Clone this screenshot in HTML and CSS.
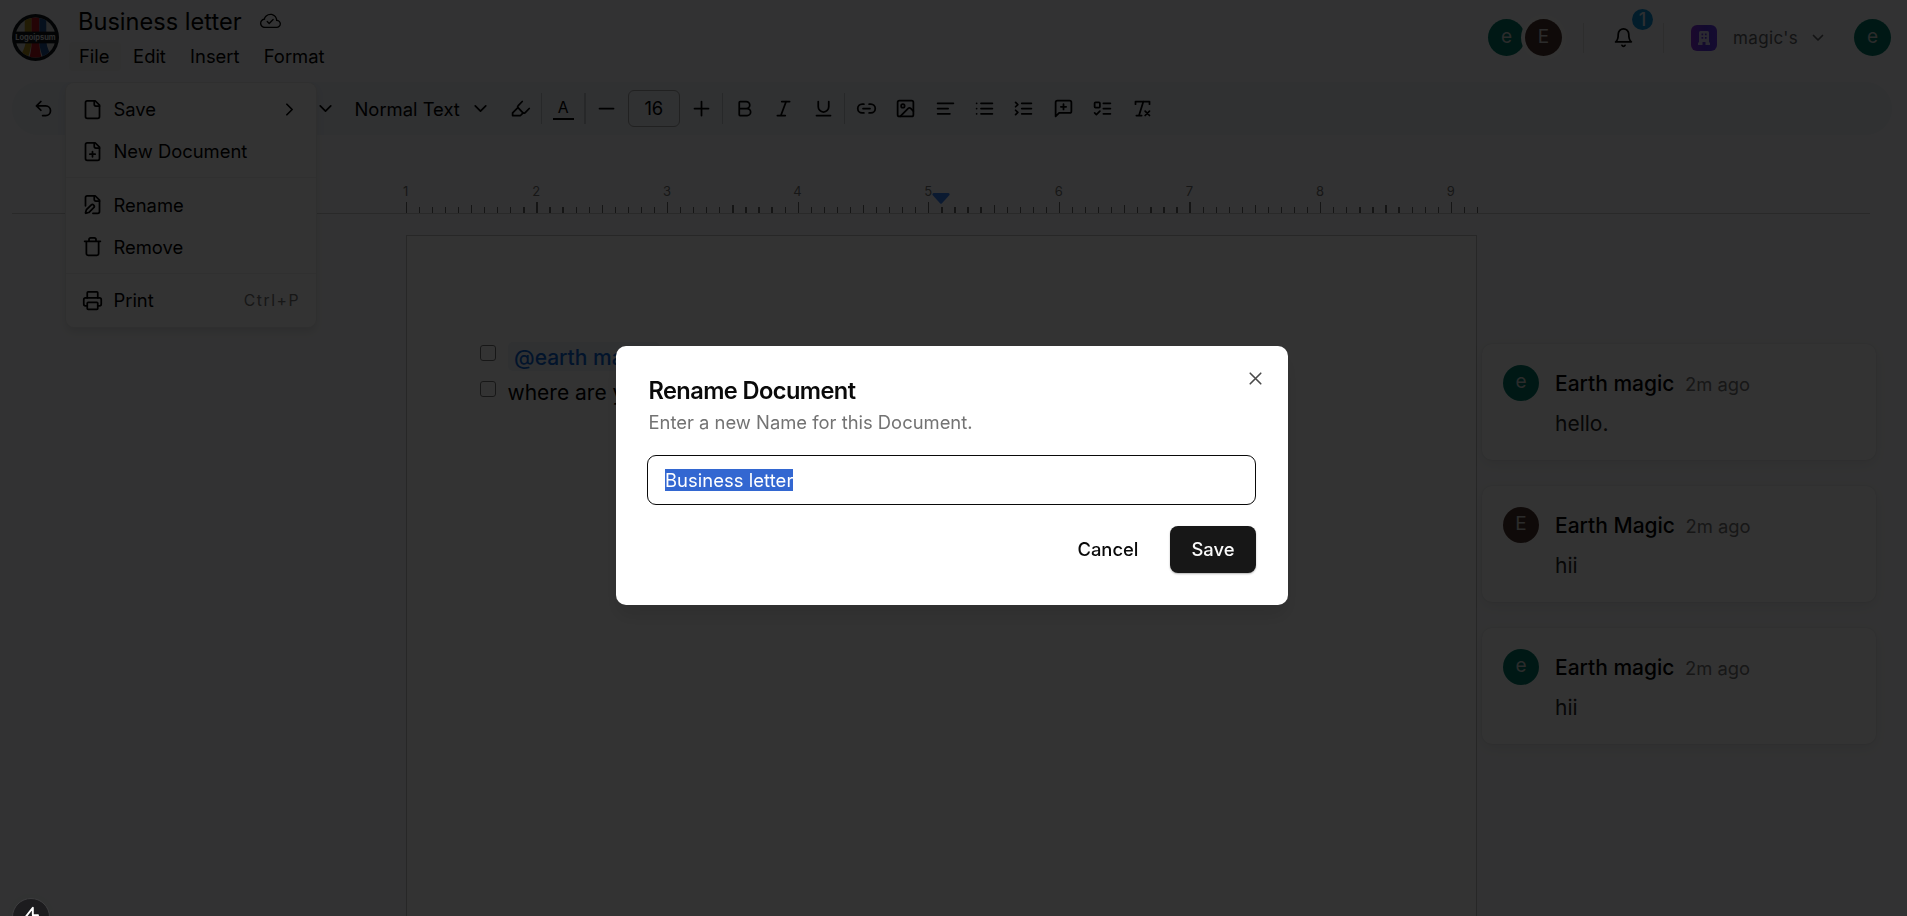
FILE: index.html
```html
<!DOCTYPE html>
<html lang="en">
<head>
<meta charset="utf-8">
<title>Business letter</title>
<link rel="stylesheet" href="styles.css">
</head>
<body>
<div class="app">
  <header class="header">
    <svg class="logo" viewBox="0 0 48 48">
      <defs><clipPath id="disc"><circle cx="24" cy="24" r="20.5"/></clipPath></defs>
      <circle cx="24" cy="24" r="24" fill="#10161d"/>
      <g clip-path="url(#disc)">
        <rect width="48" height="48" fill="#cfd0cf"/>
        <path d="M13 0h7v19h-7zM14 28h6c-.5 7-2 12-5 20H4c6-7 9-12 10-20z" fill="#a98a1c"/>
        <path d="M20 0h8v19h-8zM20 28h8c0 7 1 12 3 20H17c2-8 3-13 3-20z" fill="#b3161f"/>
        <path d="M28 0h7v19h-7zM28 28h7c1 8 4 13 9 20H33c-3-8-5-13-5-20z" fill="#1f4f8f"/>
      </g>
      <rect x="1" y="18" width="46" height="12" fill="#10161d"/>
      <text x="24" y="26.800" text-anchor="middle" class="logo-text">Logoipsum</text>
    </svg>
    <div class="doc-head">
      <div class="doc-title"><span>Business letter</span>
        <svg class="cloud" viewBox="0 0 16 16"><path d="M4.406 3.342A5.53 5.53 0 0 1 8 2c2.69 0 4.923 2 5.166 4.579C14.758 6.804 16 8.137 16 9.773 16 11.569 14.502 13 12.687 13H3.781C1.708 13 0 11.366 0 9.318c0-1.763 1.266-3.223 2.942-3.593.143-.863.698-1.723 1.464-2.383m.653.757c-.757.653-1.153 1.44-1.153 2.056v.448l-.445.049C2.064 6.805 1 7.952 1 9.318 1 10.785 2.23 12 3.781 12h8.906C13.98 12 15 10.988 15 9.773c0-1.216-1.02-2.228-2.313-2.228h-.5v-.5C12.188 4.825 10.328 3 8 3a4.53 4.53 0 0 0-2.941 1.1z"/><path d="M10.354 6.146a.5.5 0 0 1 0 .708l-3 3a.5.5 0 0 1-.708 0l-1.5-1.5a.5.5 0 1 1 .708-.708L7 8.793l2.646-2.647a.5.5 0 0 1 .708 0"/></svg>
      </div>
      <nav class="menubar"><span class="open">File</span><span>Edit</span><span>Insert</span><span>Format</span></nav>
    </div>
    <div class="account">
      <div class="avatars"><span class="avatar teal">e</span><span class="avatar brown">E</span></div>
      <i class="vline"></i>
      <div class="bell">
        <svg class="icon" viewBox="0 0 24 24"><path d="M6 8a6 6 0 0 1 12 0c0 7 3 9 3 9H3s3-2 3-9M10.3 21a1.94 1.94 0 0 0 3.4 0"/></svg>
        <b class="count">1</b>
      </div>
      <i class="vline"></i>
      <svg class="org" viewBox="0 0 26 26">
        <defs><linearGradient id="orgfill" x1="0" x2="1"><stop offset="0" stop-color="#8a2fe0"/><stop offset=".6" stop-color="#5b36e8"/><stop offset="1" stop-color="#6a3cf0"/></linearGradient></defs>
        <rect width="26" height="26" rx="6" fill="url(#orgfill)"/>
        <path fill="#d8d0f2" fill-rule="evenodd" d="M9.500 6h7a1.500 1.500 0 0 1 1.500 1.500V17.500h1V20h-4.500v-3h-3v3H7v-2.500h1V7.500A1.500 1.500 0 0 1 9.500 6zM10.500 8.500v1.700h1.700V8.500zm3.400 0v1.700h1.700V8.500zM10.500 12v1.700h1.700V12zm3.400 0v1.700h1.700V12z"/>
      </svg>
      <span class="org-name">magic's</span>
      <svg class="org-chevron" viewBox="0 0 12 8"><path d="M1.500 1.500 6 6l4.500-4.500"/></svg>
      <span class="avatar teal me">e</span>
    </div>
  </header>

  <div class="toolbar">
    <span class="tool"><svg class="icon" viewBox="0 0 24 24"><path d="M9 14 4 9l5-5M4 9h10.500a5.500 5.500 0 0 1 0 11H11"/></svg></span>
    <span class="picker font"><svg class="icon" viewBox="0 0 24 24"><path d="m6 9 6 6 6-6"/></svg></span>
    <span class="picker style">Normal Text<svg class="icon" viewBox="0 0 24 24"><path d="m6 9 6 6 6-6"/></svg></span>
    <span class="tool"><svg class="icon" viewBox="0 0 24 24"><path d="m9 11-6 6v3h9l3-3"/><path d="m22 12-4.600 4.600a2 2 0 0 1-2.800 0l-5.200-5.200a2 2 0 0 1 0-2.800L14 4"/></svg></span>
    <i class="sep"></i>
    <span class="tool color"><span>A</span><i></i></span>
    <i class="sep"></i>
    <span class="tool"><svg class="icon" viewBox="0 0 24 24"><path d="M4 12h16"/></svg></span>
    <span class="size">16</span>
    <span class="tool"><svg class="icon" viewBox="0 0 24 24"><path d="M4 12h16M12 4v16"/></svg></span>
    <i class="sep"></i>
    <span class="tool"><svg class="icon" viewBox="0 0 24 24"><path d="M6 12h9a4 4 0 0 1 0 8H7a1 1 0 0 1-1-1V5a1 1 0 0 1 1-1h7a4 4 0 0 1 0 8"/></svg></span>
    <span class="tool"><svg class="icon" viewBox="0 0 24 24"><path d="M19 4h-9M14 20H5M15 4 9 20"/></svg></span>
    <span class="tool"><svg class="icon" viewBox="0 0 24 24"><path d="M6 4v6a6 6 0 0 0 12 0V4M4 20h16"/></svg></span>
    <i class="sep"></i>
    <span class="tool"><svg class="icon" viewBox="0 0 24 24"><path d="M9 17H7A5 5 0 0 1 7 7h2M15 7h2a5 5 0 1 1 0 10h-2M8 12h8"/></svg></span>
    <span class="tool"><svg class="icon" viewBox="0 0 24 24"><rect x="3" y="3" width="18" height="18" rx="2"/><circle cx="9" cy="9" r="2"/><path d="m21 15-3.086-3.086a2 2 0 0 0-2.828 0L6 21"/></svg></span>
    <span class="tool"><svg class="icon" viewBox="0 0 24 24"><path d="M15 12H3M17 18H3M21 6H3"/></svg></span>
    <span class="tool"><svg class="icon" viewBox="0 0 24 24"><path d="M3 12h.01M3 18h.01M3 6h.01M8 12h13M8 18h13M8 6h13"/></svg></span>
    <span class="tool"><svg class="icon" viewBox="0 0 24 24"><path d="m3 10 2.500-2.500L3 5M3 19l2.500-2.500L3 14M10 6h11M10 12h11M10 18h11"/></svg></span>
    <span class="tool"><svg class="icon" viewBox="0 0 24 24"><path d="M21 15a2 2 0 0 1-2 2H7l-4 4V5a2 2 0 0 1 2-2h14a2 2 0 0 1 2 2zM12 7v6M9 10h6"/></svg></span>
    <span class="tool"><svg class="icon" viewBox="0 0 24 24"><rect x="3" y="5" width="6" height="6" rx="1"/><path d="m3 17 2 2 4-4M13 6h8M13 12h8M13 18h8"/></svg></span>
    <span class="tool"><svg class="icon" viewBox="0 0 24 24"><path d="M4 7V4h16v3M5 20h6M13 4 8 20M15 15l5 5M20 15l-5 5"/></svg></span>
  </div>

  <div class="ruler"><div class="marks" id="marks"></div>
    <svg class="marker" viewBox="0 0 18 11"><path d="M1.500 0h15q1.500.5 1 2L10 10.300q-1 1-2 0L.5 2Q0 .5 1.500 0z"/></svg>
  </div>

  <main class="workspace">
    <article class="page">
      <div class="task"><i class="box"></i><span class="mention">@earth magic</span></div>
      <div class="task"><i class="box"></i><span>where are you</span></div>
    </article>
    <aside class="threads">
      <section class="card"><span class="avatar teal">e</span><div><p class="who"><b>Earth magic</b><time>2m ago</time></p><p class="msg">hello.</p></div></section>
      <section class="card"><span class="avatar brown">E</span><div><p class="who"><b>Earth Magic</b><time>2m ago</time></p><p class="msg">hii</p></div></section>
      <section class="card"><span class="avatar teal">e</span><div><p class="who"><b>Earth magic</b><time>2m ago</time></p><p class="msg">hii</p></div></section>
    </aside>
  </main>
</div>

<div class="menu">
  <div class="item"><svg class="icon" viewBox="0 0 24 24"><path d="M15 2H6a2 2 0 0 0-2 2v16a2 2 0 0 0 2 2h12a2 2 0 0 0 2-2V7Z"/><path d="M14 2v4a2 2 0 0 0 2 2h4"/></svg>Save<svg class="icon end" viewBox="0 0 24 24"><path d="m9 18 6-6-6-6"/></svg></div>
  <div class="item"><svg class="icon" viewBox="0 0 24 24"><path d="M15 2H6a2 2 0 0 0-2 2v16a2 2 0 0 0 2 2h12a2 2 0 0 0 2-2V7Z"/><path d="M14 2v4a2 2 0 0 0 2 2h4M9 15h6M12 18v-6"/></svg>New Document</div>
  <hr>
  <div class="item"><svg class="icon" viewBox="0 0 24 24"><path d="M12.500 22H18a2 2 0 0 0 2-2V7l-5-5H6a2 2 0 0 0-2 2v9.500"/><path d="M14 2v4a2 2 0 0 0 2 2h4"/><path d="M13.378 15.626a1 1 0 1 0-3.004-3.004l-5.010 5.012a2 2 0 0 0-.506.854l-.837 2.870a.5.5 0 0 0 .62.62l2.870-.837a2 2 0 0 0 .854-.506z"/></svg>Rename</div>
  <div class="item"><svg class="icon" viewBox="0 0 24 24"><path d="M3 6h18M19 6v14c0 1-1 2-2 2H7c-1 0-2-1-2-2V6M8 6V4c0-1 1-2 2-2h4c1 0 2 1 2 2v2"/></svg>Remove</div>
  <hr>
  <div class="item"><svg class="icon" viewBox="0 0 24 24"><path d="M6 18H4a2 2 0 0 1-2-2v-5a2 2 0 0 1 2-2h16a2 2 0 0 1 2 2v5a2 2 0 0 1-2 2h-2"/><path d="M6 9V3a1 1 0 0 1 1-1h10a1 1 0 0 1 1 1v6"/><rect x="6" y="14" width="12" height="8" rx="1"/></svg>Print<span class="shortcut">Ctrl+P</span></div>
</div>

<div class="overlay"></div>

<div class="dialog">
  <h2>Rename Document</h2>
  <p class="hint">Enter a new Name for this Document.</p>
  <div class="field"><span class="selected">Business letter</span></div>
  <div class="actions"><span class="btn">Cancel</span><span class="btn primary">Save</span></div>
  <svg class="close" viewBox="0 0 24 24"><path d="M18 6 6 18M6 6l12 12"/></svg>
</div>

<div class="dev-badge"><svg viewBox="0 0 24 24"><path d="M13.500 2 4.500 13.500h7l-1 8.500 9-11.500h-6z"/></svg></div>
<script src="script.js"></script>
</body>
</html>
```
FILE: styles.css
```css
* { box-sizing: border-box; }
html, body { margin: 0; height: 100%; overflow: hidden; }
body { background: #fafbfd; color: #000; font-family: Inter, "Liberation Sans", sans-serif; font-size: 18.4px; }
p, h2 { margin: 0; }
.icon { width: 21px; height: 21px; flex: none; fill: none; stroke: #000; stroke-width: 2; stroke-linecap: round; stroke-linejoin: round; }
.app { display: flex; flex-direction: column; height: 916px; overflow: hidden; }

.header { display: flex; height: 82px; flex: none; padding-left: 12px; }
.logo { width: 47px; height: 47px; margin-top: 14px; }
.logo-text { font: 700 7.600px Inter, sans-serif; fill: #e4e6e8; }
.doc-head { padding-left: 10px; }
.doc-title { display: flex; align-items: center; height: 42px; padding-left: 9px; font-size: 23.6px; line-height: 42px; }
.doc-title span { padding-top: 1px; }
.cloud { width: 21px; height: 21px; margin-left: 18px; }
.menubar { display: flex; }
.menubar span { height: 29px; line-height: 29px; padding: 0 12.100px; }
.menubar span:first-child { padding: 0 11px 0 10px; margin-right: .5px; }
.menubar .open { background: #f5f5f5; border-radius: 4px; }
.account { display: flex; align-items: center; height: 56px; margin-left: auto; margin-right: 16px; padding-top: 19px; }
.account > * { flex: none; }
.avatar { display: flex; align-items: center; justify-content: center; width: 37px; height: 37px; border-radius: 50%; color: #d4d8d8; font-size: 19px; line-height: 1; padding-bottom: 2px; }
.teal { background: #007a6a; }
.brown { background: #4e342e; }
.avatars { display: flex; }
.avatars .brown { box-shadow: 0 0 0 4px #fff; }
.vline { width: 1px; height: 30px; background: #e0e0e0; }
.avatars + .vline { margin-left: 21px; }
.bell { position: relative; display: flex; margin: 0 29px; }
.bell .count { position: absolute; left: 19px; top: -18px; width: 21px; height: 21px; border-radius: 50%; background: #0e90d8; color: #d9e8f2; font-size: 18px; font-weight: 500; line-height: 21px; text-align: center; }
.org { width: 26px; height: 26px; margin-left: 27px; }
.org-name { margin-left: 16px; width: 79px; font-size: 17px; letter-spacing: .35px; color: #5f5f66; }
.org-chevron { width: 12px; height: 8px; fill: none; stroke: #5f5f66; stroke-width: 1.700; stroke-linecap: round; stroke-linejoin: round; }
.me { margin-left: 30px; }

.toolbar { display: flex; align-items: center; gap: 2.625px; width: 1880px; height: 53px; flex: none; margin-left: 12px; padding-left: 13px; border-radius: 27px; background: #edf2f9; }
.tool { display: flex; align-items: center; justify-content: center; width: 36.750px; height: 37px; flex: none; }
.picker { display: flex; align-items: center; justify-content: space-between; padding: 0 8px; height: 37px; flex: none; }
.font { width: 279.500px; justify-content: flex-end; }
.style { width: 152.500px; }
.sep { width: 1.312px; height: 31px; background: #c4c8ce; flex: none; }
.color { flex-direction: column; justify-content: flex-start; font-size: 15.750px; line-height: 19px; padding-top: 8px; }
.color i { width: 21px; height: 2px; margin-top: 1px; background: #000; }
.size { display: block; width: 52.500px; height: 37px; line-height: 35px; text-align: center; border: 1.300px solid #a3a3a3; border-radius: 6px; flex: none; }

.ruler { position: relative; height: 79px; flex: none; width: 1858px; margin-left: 12px; padding: 67px 0 0 393.700px; border-bottom: 1px solid #cccccc; }
.marks { display: flex; align-items: flex-end; width: 1084px; height: 11px; }
.mark { position: relative; width: 13.065px; height: 6px; flex: none; }
.mark i { display: block; width: 1.312px; height: 100%; background: #6b6b6b; }
.mark.mid { height: 8px; }
.mark.major { height: 11px; }
.mark b { position: absolute; left: -10px; bottom: 14px; width: 20px; font-size: 13px; font-weight: 400; line-height: 16px; text-align: center; color: #737373; }
.marker { position: absolute; left: 920px; top: 58px; width: 18px; height: 11px; fill: #3b82f6; }

.workspace { display: flex; align-items: flex-start; padding: 21px 0 0 406px; }
.page { width: 1071px; height: 1386px; flex: none; background: #fff; border: 1px solid #c0c0c0; padding: 103px 73px; font-size: 21px; }
.task { display: flex; height: 35.500px; line-height: 35.500px; }
.box { width: 16px; height: 16px; margin: 6px 11.500px 0 0; border: 1.300px solid #767676; border-radius: 3px; background: #fff; flex: none; }
.mention { height: 29px; line-height: 31px; margin-top: 3px; padding: 0 6.500px; border-radius: 5px; background: #eef3fb; color: #0b66d8; font-weight: 500; }
.threads { display: flex; flex-direction: column; gap: 26px; padding: 108.500px 0 0 5px; }
.card { display: flex; width: 393.500px; height: 116px; padding: 21px; border-radius: 10px; background: #fff; box-shadow: 0 0 2px rgba(0,0,0,.12), 0 4px 14px rgba(0,0,0,.08); }
.card .avatar { width: 36px; height: 36px; margin-right: 16px; flex: none; }
.who { display: flex; align-items: baseline; gap: 10.500px; height: 40px; line-height: 37px; }
.who b { font-size: 21px; font-weight: 500; }
.who time { color: #737373; }
.msg { font-size: 21px; line-height: 37px; color: #262626; }

.menu { position: absolute; left: 66px; top: 83px; width: 250px; height: 244px; padding: 5px 5.250px; border-radius: 8px; background: #fff; box-shadow: 0 0 0 1px #ebebeb, 0 5px 8px rgba(0,0,0,.1); }
.item { display: flex; align-items: center; height: 42px; padding: 0 10.500px; gap: 10.700px; }
.item .end { margin-left: auto; }
.menu hr { height: 1px; border: 0; margin: 5.250px -5.250px; background: #ededed; }
.shortcut { margin-left: auto; font-size: 15.750px; letter-spacing: 1.570px; color: #737373; }

.overlay { position: fixed; inset: 0; background: rgba(0,0,0,.8); }

.dialog { position: fixed; left: 616px; top: 346px; width: 672px; height: 259px; padding: 32px; border-radius: 10px; background: #fff; box-shadow: 0 12px 18px rgba(0,0,0,.1); }
.dialog h2 { height: 25px; padding-left: .5px; font-size: 23.600px; font-weight: 600; letter-spacing: -.59px; line-height: 25px; color: #0a0a0a; }
.hint { margin-top: 6px; padding-left: .5px; line-height: 27px; height: 28px; color: #737373; }
.field { display: flex; align-items: center; width: 609px; height: 50px; margin: 18px 0 0 -1px; padding: 0 17px; border: 1.300px solid #0a0a0a; border-radius: 9px; }
.selected { height: 22px; line-height: 22px; letter-spacing: .06px; background: #3367d1; color: #fff; }
.actions { display: flex; justify-content: flex-end; gap: 10px; margin-top: 20.500px; }
.btn { height: 47px; padding: 0 21.500px; border-radius: 8px; font-weight: 500; line-height: 47px; color: #0a0a0a; }
.primary { background: #171717; color: #fafafa; box-shadow: 0 1px 2px rgba(0,0,0,.3); }
.close { position: absolute; left: 629px; top: 22px; width: 21px; height: 21px; fill: none; stroke: #4a4a4a; stroke-width: 1.900; stroke-linecap: round; }
.dev-badge { position: fixed; left: 12px; top: 898px; width: 38px; height: 38px; border-radius: 50%; background: #1c1c1e; border: 1px solid #3c3c3e; display: flex; justify-content: center; padding-top: 7px; box-shadow: 0 0 20px rgba(0,0,0,.08); }
.dev-badge svg { width: 21px; height: 21px; fill: none; stroke: #fff; stroke-width: 2.200; stroke-linejoin: round; }
```
FILE: script.js
```javascript
const marks = document.getElementById("marks");
for (let i = 0; i <= 82; i++) {
  const mark = document.createElement("span");
  mark.className = "mark" + (i % 10 === 0 ? " major" : i % 5 === 0 ? " mid" : "");
  mark.appendChild(document.createElement("i"));
  if (i % 10 === 0) {
    const label = document.createElement("b");
    label.textContent = i / 10 + 1;
    mark.appendChild(label);
  }
  marks.appendChild(mark);
}
```
